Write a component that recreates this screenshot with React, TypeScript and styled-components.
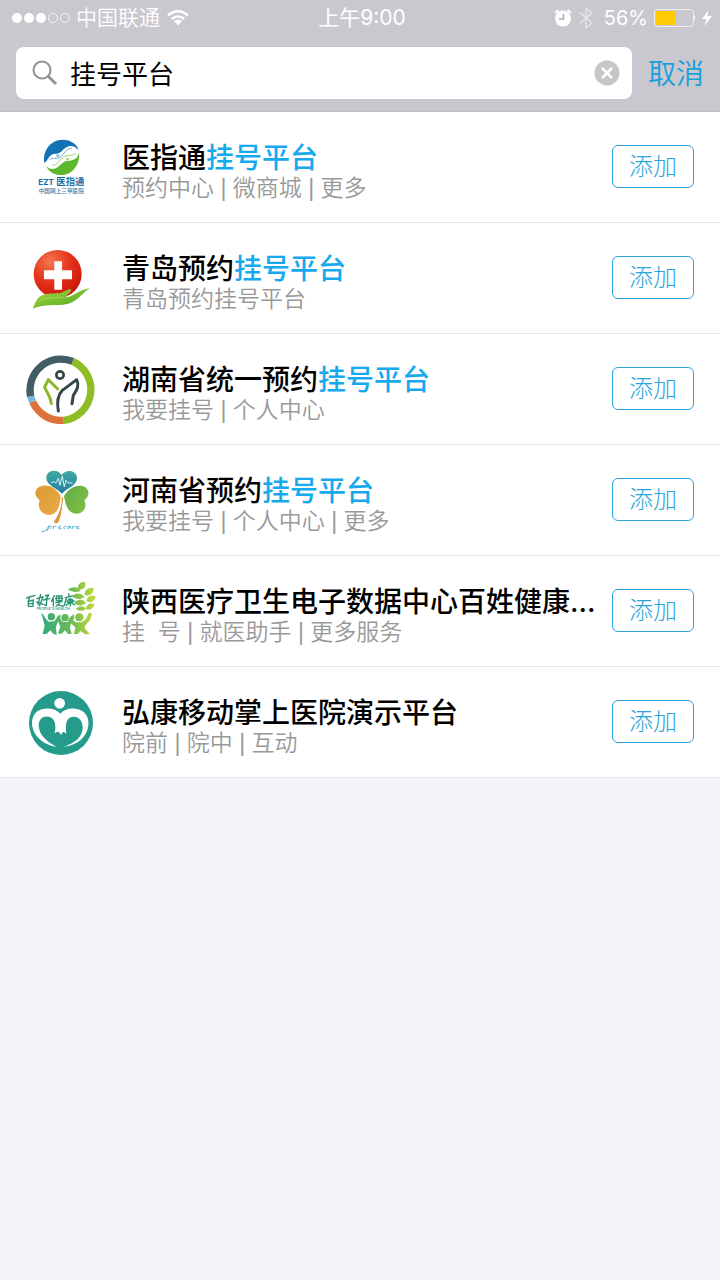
import React, { useState } from "react";
import styled, { createGlobalStyle } from "styled-components";

const GlobalStyle = createGlobalStyle`
  * { box-sizing: border-box; }
  body {
    margin: 0;
    background: #f3f3f8;
    font-family: Inter, "Noto Sans CJK SC", sans-serif;
  }
  button, input { font-family: inherit; }
`;

const Page = styled.div`
  min-height: 100vh;
  background: #f3f3f8;
`;

const Header = styled.header`
  background: #c9c8cf;
  border-bottom: 1px solid #c1c0c7;
`;

const StatusBar = styled.div`
  display: grid;
  grid-template-columns: 1fr auto 1fr;
  align-items: center;
  height: 36px;
  padding: 0 8px 0 12px;
  color: #fff;
  font-size: 20px;
  line-height: 36px;
`;

const StatusGroup = styled.div<{ $end?: boolean }>`
  display: flex;
  align-items: center;
  justify-content: ${(p) => (p.$end ? "flex-end" : "flex-start")};
  gap: 6px;
`;

const Carrier = styled.span`
  font-size: 21px;
  font-weight: 350;
`;

const Percent = styled.span`
  margin-left: 4px;
  font-weight: 400;
`;

const Clock = styled.time`
  font-size: 21px;
  font-weight: 400;
`;

const SearchBar = styled.form`
  display: flex;
  align-items: center;
  gap: 16px;
  padding: 11px 16px 12px;
`;

const SearchField = styled.label`
  display: flex;
  flex: 1;
  align-items: center;
  gap: 12px;
  min-width: 0;
  height: 52px;
  padding: 0 12px 0 16px;
  border-radius: 8px;
  background: #fff;
`;

const SearchInput = styled.input`
  flex: 1;
  min-width: 0;
  height: 52px;
  padding: 0 0 2px;
  border: 0;
  outline: 0;
  background: transparent;
  color: #000;
  font-size: 26px;
`;

const IconButton = styled.button`
  display: flex;
  padding: 0;
  border: 0;
  background: none;
`;

const CancelButton = styled.button`
  padding: 2px 0 0;
  border: 0;
  background: none;
  color: #169fdc;
  font-size: 28px;
  font-weight: 350;
  line-height: 40px;
`;

const Results = styled.ul`
  margin: 0;
  padding: 0;
  list-style: none;
  background: #fff;
`;

const Row = styled.li`
  display: flex;
  align-items: center;
  padding: 19px 26px;
  border-bottom: 1px solid #e8e8ea;
`;

const Logo = styled.svg`
  flex: none;
  width: 70px;
  height: 70px;
`;

const Info = styled.div`
  flex: 1;
  min-width: 0;
  margin: 0 16px 0 26px;
  padding-top: 12px;
`;

const Title = styled.h2`
  margin: 0;
  color: #000;
  font-size: 28px;
  font-weight: 500;
  line-height: 30px;
  white-space: nowrap;
`;

const Match = styled.span`
  color: #17a9ee;
`;

const Menu = styled.p`
  margin: 0;
  color: #999;
  font-family: "Liberation Sans", "Noto Sans CJK SC", sans-serif;
  font-size: 23px;
  font-weight: 350;
  line-height: 30px;
  white-space: pre;
`;

const AddButton = styled.button`
  flex: none;
  width: 82px;
  height: 43px;
  margin-bottom: 2px;
  padding: 0;
  border: 1px solid #2aa5dc;
  border-radius: 6px;
  background: #fff;
  color: #2aa5dc;
  font-size: 24px;
  font-weight: 300;
  line-height: 41px;
`;

const LOGO_BOX = "30 21 210 210";

const EztLogo = () => (
  <Logo viewBox={LOGO_BOX} aria-hidden="true">
    <circle cx="137" cy="97" r="53" fill="#fff" />
    <path d="M85 113C79 78 103 45 139 44C166 44 184 59 188 76C178 63 164 60 153 66C140 72 137 84 123 86C110 85 101 91 96 101C91 110 88 112 85 113Z" fill="#1272b4" />
    <path d="M90 122C98 132 110 134 121 129C134 122 138 111 151 108C163 107 178 105 184 95C188 90 189 85 189 81C194 118 169 150 136 150C112 150 96 137 90 122Z" fill="#5db72e" />
    <g fill="none" stroke="#1e82bd" strokeWidth="2" strokeLinecap="round">
      <path d="M101 104C110 96 122 103 132 97C145 86 151 71 166 70" />
      <circle cx="125" cy="92" r="3" />
    </g>
    <g fill="none" stroke="#72bd38" strokeWidth="2" strokeLinecap="round">
      <path d="M110 121C124 122 132 101 146 94C160 89 170 93 178 86" />
      <circle cx="154" cy="102" r="3" />
    </g>
    <text x="67" y="180" fill="#126da5" fontSize="24" fontWeight="700">EZT</text>
    <text x="121" y="181" fill="#126da5" fontSize="28" fontWeight="700">医指通</text>
    <text x="68" y="203" fill="#3d7ba6" fontSize="17" fontWeight="500">中国网上三甲医院</text>
  </Logo>
);

const QingdaoLogo = () => (
  <Logo viewBox={LOGO_BOX} aria-hidden="true">
    <defs>
      <radialGradient id="ball" cx="0.35" cy="0.25" r="0.8">
        <stop offset="0" stopColor="#f4794f" />
        <stop offset="0.5" stopColor="#e5341d" />
        <stop offset="1" stopColor="#cb1508" />
      </radialGradient>
      <linearGradient id="palm" x1="0" y1="0" x2="1" y2="1">
        <stop offset="0" stopColor="#a5d845" />
        <stop offset="1" stopColor="#4fa41c" />
      </linearGradient>
    </defs>
    <circle cx="125" cy="114" r="72" fill="url(#ball)" />
    <path d="M115 76H138V103H168V130H138V161H115V130H84V103H115Z" fill="#fff" />
    <path d="M50 218C58 201 61 187 76 179C91 170 108 173 126 172C144 170 153 158 166 160C165 169 154 177 149 184C168 184 187 162 222 156C201 169 190 188 170 198C146 211 112 205 85 209C70 211 60 214 50 218Z" fill="url(#palm)" />
    <path d="M68 196C91 182 119 186 145 183" fill="none" stroke="#a8d84e" strokeWidth="3" />
  </Logo>
);

const HunanLogo = () => (
  <Logo viewBox={LOGO_BOX} aria-hidden="true">
    <g fill="none" strokeWidth="22">
      <path d="M170 43A93 93 0 0 1 143 220" stroke="#8fbd25" />
      <path d="M143 220A93 93 0 0 1 50 164" stroke="#dc713b" />
      <path d="M50 164A93 93 0 0 1 44 148" stroke="#78b7da" />
      <path d="M44 148A93 93 0 0 1 170 43" stroke="#425d65" />
    </g>
    <circle cx="132" cy="84" r="11" fill="none" stroke="#344448" strokeWidth="8" />
    <g fill="none" strokeLinecap="round" strokeLinejoin="round" strokeWidth="9">
      <path d="M125 126L97 98L86 120C92 138 103 143 106 170" stroke="#8ab62e" />
      <path d="M127 192C122 165 124 146 139 130L182 98C192 117 180 132 172 145L168 170" stroke="#34464a" />
    </g>
  </Logo>
);

const HenanLogo = () => (
  <Logo viewBox={LOGO_BOX} aria-hidden="true">
    <defs>
      <linearGradient id="teal" x1="0" y1="0" x2="0" y2="1">
        <stop offset="0" stopColor="#42aaa0" />
        <stop offset="1" stopColor="#237ba2" />
      </linearGradient>
      <linearGradient id="amber" x1="0" y1="0" x2="1" y2="1">
        <stop offset="0" stopColor="#dc9b31" />
        <stop offset="1" stopColor="#edaa49" />
      </linearGradient>
      <linearGradient id="leaf" x1="0" y1="0" x2="1" y2="1">
        <stop offset="0" stopColor="#5fae4b" />
        <stop offset="1" stopColor="#87be42" />
      </linearGradient>
    </defs>
    <path d="M138 107C124 91 91 82 91 59C91 35 125 31 137 51C150 31 183 36 183 61C183 83 151 91 138 107Z" fill="url(#teal)" />
    <path d="M134 114C122 92 100 78 78 84C55 89 51 113 71 127C62 151 78 169 98 171C127 171 132 140 134 114Z" fill="url(#amber)" />
    <path d="M144 114C155 96 172 82 194 83C220 85 225 113 205 127C215 148 201 168 181 167C154 166 148 138 144 114Z" fill="url(#leaf)" />
    <path d="M137 118C139 144 129 170 113 192C120 198 124 196 127 192C139 168 137 143 142 119Z" fill="#df933a" />
    <path d="M105 75L113 71L120 75L127 61L132 82L139 54L145 87L150 67L156 75H170" fill="none" stroke="#d8f4f1" strokeWidth="3" />
    <path d="M76 220C87 225 95 210 99 203L94 220M98 207C105 201 110 206 102 213M114 203L111 213M115 206L122 204M127 210C136 208 135 202 130 205C124 210 129 215 137 211M151 205C144 202 139 214 147 212M163 205C154 202 150 215 158 211L164 204L163 212M171 204L168 213M172 207L179 204M181 210C190 208 189 202 184 205C179 211 184 215 191 210" fill="none" stroke="#55b6ca" strokeWidth="3" />
  </Logo>
);

const ShaanxiLogo = () => (
  <Logo viewBox={LOGO_BOX} aria-hidden="true">
    <defs>
      <linearGradient id="people" gradientUnits="userSpaceOnUse" x1="76" y1="0" x2="230" y2="0">
        <stop offset="0" stopColor="#35a981" />
        <stop offset="0.55" stopColor="#66b956" />
        <stop offset="1" stopColor="#bcd73b" />
      </linearGradient>
    </defs>
    <g fill="none" stroke="#279273" strokeWidth="4" strokeLinecap="round" strokeLinejoin="round">
      <path d="M31 87L57 79M42 82L37 95V112H51L52 93L36 98M38 104H50" />
      <path d="M74 76L66 107M63 89L81 83L70 111M62 99L81 106M88 80L98 78L89 91M82 93L101 89M93 85L91 110L85 107" />
      <path d="M115 80L106 97M112 91V111M121 81H138V95H121ZM119 88H140M119 101L138 98M129 81V105L120 112M125 107L142 112" />
      <path d="M158 75L160 82M148 86L173 80M152 86L144 110M157 91H169V101H154M153 96H175M163 88V111M161 102L150 109M166 101L176 108" />
    </g>
    <text x="62" y="122" fontSize="11" fontWeight="700" fill="#52a9a1">PEOPLE'S HEALTH</text>
    <g fill="url(#people)">
      <path d="M156 61C170 51 188 53 194 66C181 72 166 69 156 61Z" />
      <path d="M187 61C183 46 193 38 207 39C212 54 203 63 187 61Z" />
      <path d="M168 82C180 69 197 73 205 84C193 94 179 91 168 82Z" />
      <path d="M206 78C205 60 217 56 233 57C232 75 221 83 206 78Z" />
      <path d="M174 102C186 89 201 90 210 102C199 112 186 112 174 102Z" />
      <path d="M211 97C214 82 224 78 239 82C235 98 225 103 211 97Z" />
      <path d="M180 119C190 109 203 109 210 119C200 128 188 127 180 119Z" />
      <path d="M209 120C211 106 224 100 235 106C232 120 222 126 209 120Z" />
      <circle cx="106" cy="143" r="11" />
      <circle cx="147" cy="146" r="11" />
      <circle cx="190" cy="145" r="12" />
      <path d="M76 131C82 132 87 151 99 158L115 157L126 140L134 137L133 148L123 164L120 174L122 197L112 195L103 184L92 195H80L86 170Z" />
      <path d="M132 148L140 159H155L162 144L174 136L175 146L164 165L162 177L167 195L155 194L147 184L137 194H126L133 173L126 156Z" />
      <path d="M166 151L180 160H197L210 151L218 132L228 133L222 153L207 170L206 178L222 196H207L194 186L185 195H174L178 175L164 163Z" />
    </g>
  </Logo>
);

const HongkangLogo = () => (
  <Logo viewBox={LOGO_BOX} aria-hidden="true">
    <circle cx="135" cy="129" r="96" fill="#249b8b" />
    <circle cx="131" cy="70" r="16" fill="#fff" />
    <path d="M133 101C143 89 159 83 179 86C207 90 220 110 217 137C213 168 187 196 143 200C177 190 199 171 200 145C200 120 187 108 168 111C151 114 147 132 151 162C144 153 139 154 135 166C131 153 123 152 116 161C122 132 116 113 97 110C76 108 65 123 69 144C73 168 94 186 121 200C78 195 50 163 48 132C47 106 61 88 86 86C106 84 123 89 133 101Z" fill="#fff" />
  </Logo>
);

const SearchIcon = () => (
  <svg width="26" height="26" viewBox="0 0 26 26" fill="none" stroke="#929292" aria-hidden="true">
    <circle cx="10" cy="10" r="8.5" strokeWidth="2" />
    <path d="M16 16L24 24" strokeWidth="3" />
  </svg>
);

const SignalIcon = () => (
  <svg width="58" height="12" viewBox="0 0 58 12" fill="#fff" aria-hidden="true">
    <circle cx="5" cy="6" r="5" />
    <circle cx="17" cy="6" r="5" />
    <circle cx="29" cy="6" r="5" />
    <circle cx="41" cy="6" r="4.5" fill="none" stroke="#fff" strokeOpacity="0.7" />
    <circle cx="53" cy="6" r="4.5" fill="none" stroke="#fff" strokeOpacity="0.7" />
  </svg>
);

const WifiIcon = () => (
  <svg width="24" height="18" viewBox="0 0 24 18" fill="none" stroke="#fff" strokeWidth="2.5" aria-hidden="true">
    <path d="M2 6.5C8 .7 16 .7 22 6.5M5.8 10C9.6 6.5 14.4 6.5 18.2 10" />
    <path d="M8 12Q12 9 16 12L12 16.5Z" fill="#fff" stroke="none" />
  </svg>
);

const AlarmIcon = () => (
  <svg width="18" height="18" viewBox="0 0 18 18" aria-hidden="true">
    <circle cx="9" cy="9.5" r="8" fill="#fff" />
    <path d="M1 4L4.5 1M17 4L13.5 1" stroke="#fff" strokeWidth="2" />
    <path d="M9.5 5V10H5" fill="none" stroke="#aaa9b0" strokeWidth="1.5" />
  </svg>
);

const BluetoothIcon = () => (
  <svg width="16" height="24" viewBox="0 0 16 24" fill="none" stroke="#e5e4e9" strokeWidth="1.5" aria-hidden="true">
    <path d="M2 6.5L14 17L8 22V2L14 7L2 17.5" />
  </svg>
);

const BatteryIcon = () => (
  <svg width="42" height="18" viewBox="0 0 42 18" aria-hidden="true">
    <rect x="0.5" y="0.5" width="39" height="17" rx="3" fill="none" stroke="#eeedf1" />
    <path d="M2 2H22V16H2Z" fill="#ffcb05" />
    <path d="M40 6Q42 9 40 12Z" fill="#fff" />
  </svg>
);

const BoltIcon = () => (
  <svg width="10" height="16" viewBox="0 0 10 16" fill="#fff" aria-hidden="true">
    <path d="M6.5 0L0 9H4.5L2.5 16L10 6H5.5Z" />
  </svg>
);

const ClearIcon = () => (
  <svg width="26" height="26" viewBox="0 0 26 26" aria-hidden="true">
    <circle cx="13" cy="13" r="12.5" fill="#c6c6c6" />
    <path d="M8 8L18 18M18 8L8 18" stroke="#fff" strokeWidth="2.5" />
  </svg>
);

type Result = {
  logo: () => React.JSX.Element;
  name: string;
  match?: string;
  menu: string;
};

const results: Result[] = [
  { logo: EztLogo, name: "医指通", match: "挂号平台", menu: "预约中心 | 微商城 | 更多" },
  { logo: QingdaoLogo, name: "青岛预约", match: "挂号平台", menu: "青岛预约挂号平台" },
  { logo: HunanLogo, name: "湖南省统一预约", match: "挂号平台", menu: "我要挂号 | 个人中心" },
  { logo: HenanLogo, name: "河南省预约", match: "挂号平台", menu: "我要挂号 | 个人中心 | 更多" },
  { logo: ShaanxiLogo, name: "陕西医疗卫生电子数据中心百姓健康...", menu: "挂  号 | 就医助手 | 更多服务" },
  { logo: HongkangLogo, name: "弘康移动掌上医院演示平台", menu: "院前 | 院中 | 互动" },
];

export default function App() {
  const [query, setQuery] = useState("挂号平台");

  return (
    <Page>
      <GlobalStyle />
      <Header>
        <StatusBar>
          <StatusGroup>
            <SignalIcon />
            <Carrier>中国联通</Carrier>
            <WifiIcon />
          </StatusGroup>
          <Clock>上午9:00</Clock>
          <StatusGroup $end>
            <AlarmIcon />
            <BluetoothIcon />
            <Percent>56%</Percent>
            <BatteryIcon />
            <BoltIcon />
          </StatusGroup>
        </StatusBar>
        <SearchBar onSubmit={(e) => e.preventDefault()}>
          <SearchField>
            <SearchIcon />
            <SearchInput
              type="text"
              aria-label="搜索"
              value={query}
              onChange={(e) => setQuery(e.target.value)}
            />
            <IconButton type="button" aria-label="清除" onClick={() => setQuery("")}>
              <ClearIcon />
            </IconButton>
          </SearchField>
          <CancelButton type="button">取消</CancelButton>
        </SearchBar>
      </Header>
      <Results>
        {results.map(({ logo: LogoDrawing, name, match, menu }) => (
          <Row key={name}>
            <LogoDrawing />
            <Info>
              <Title>
                {name}
                {match && <Match>{match}</Match>}
              </Title>
              <Menu>{menu}</Menu>
            </Info>
            <AddButton type="button">添加</AddButton>
          </Row>
        ))}
      </Results>
    </Page>
  );
}
